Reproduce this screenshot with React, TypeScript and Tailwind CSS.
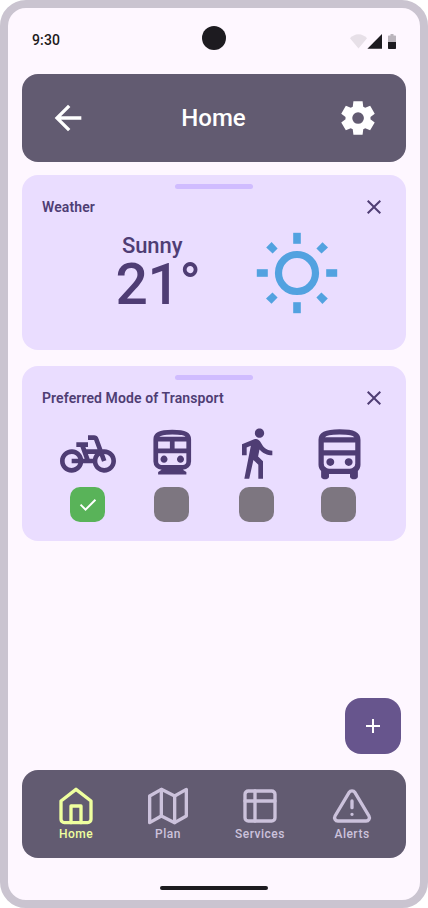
import type { ReactNode } from "react";

type IconProps = { className?: string };

/** Filled glyph drawn on the 960-unit Material grid. */
function Glyph({ d, className }: IconProps & { d: string }) {
  return (
    <svg viewBox="0 -960 960 960" fill="currentColor" className={className}>
      <path d={d} />
    </svg>
  );
}

/** Line icon drawn on a 24-unit grid. */
function LineIcon({ children }: { children: ReactNode }) {
  return (
    <svg
      viewBox="0 0 24 24"
      fill="none"
      stroke="currentColor"
      strokeWidth="2"
      strokeLinecap="round"
      strokeLinejoin="round"
      className="size-10"
    >
      {children}
    </svg>
  );
}

const ARROW_BACK =
  "m313-440 224 224-57 56-320-320 320-320 57 56-224 224h487v80H313Z";
const SETTINGS =
  "m370-80-16-128q-13-5-24.5-12T307-235l-119 50L78-375l103-78q-1-7-1-13.5v-27q0-6.5 1-13.5L78-585l110-190 119 50q11-8 23-15t24-12l16-128h220l16 128q13 5 24.5 12t22.5 15l119-50 110 190-103 78q1 7 1 13.5v27q0 6.5-2 13.5l103 78-110 190-118-50q-11 8-23 15t-24 12L590-80H370Zm112-260q58 0 99-41t41-99q0-58-41-99t-99-41q-59 0-99.5 41T342-480q0 58 40.5 99t99.5 41Z";
const CLOSE =
  "m256-200-56-56 224-224-224-224 56-56 224 224 224-224 56 56-224 224 224 224-56 56-224-224-224 224Z";
const CHECK = "M382-240 154-468l57-57 171 171 367-367 57 57-424 424Z";
const ADD = "M440-440H200v-80h240v-240h80v240h240v80H520v240h-80v-240Z";
const BUS =
  "M240-120q-17 0-28.5-11.5T200-160v-82q-18-20-29-44.5T160-340v-380q0-83 77-121.5T480-880q172 0 246 37t74 123v380q0 29-11 53.5T760-242v82q0 17-11.5 28.5T720-120h-40q-17 0-28.5-11.5T640-160v-40H320v40q0 17-11.5 28.5T280-120h-40Zm0-440h480v-120H240v120Zm142.5 222.5Q400-355 400-380t-17.5-42.5Q365-440 340-440t-42.5 17.5Q280-405 280-380t17.5 42.5Q315-320 340-320t42.5-17.5Zm280 0Q680-355 680-380t-17.5-42.5Q645-440 620-440t-42.5 17.5Q560-405 560-380t17.5 42.5Q595-320 620-320t42.5-17.5ZM258-760h448q-15-17-64.5-28.5T482-800q-107 0-156.5 12.5T258-760Zm62 480h320q33 0 56.5-23.5T720-360v-120H240v120q0 33 23.5 56.5T320-280Z";
const TRAIN =
  "M240-120v-40l60-40q-59 0-99.5-40.5T160-340v-380q0-83 77-121.5T480-880q172 0 246 37t74 123v380q0 59-40.5 99.5T660-200l60 40v40H240Zm0-440h200v-120H240v120Zm280 0h200v-120H520v120ZM382.5-337.5Q400-355 400-380t-17.5-42.5Q365-440 340-440t-42.5 17.5Q280-405 280-380t17.5 42.5Q315-320 340-320t42.5-17.5Zm280 0Q680-355 680-380t-17.5-42.5Q645-440 620-440t-42.5 17.5Q560-405 560-380t17.5 42.5Q595-320 620-320t42.5-17.5ZM300-280h360q26 0 43-17t17-43v-140H240v140q0 26 17 43t43 17ZM258-760h448q-15-17-64.5-28.5T482-800q-107 0-156.5 12.5T258-760Z";
const BIKE =
  "M18.18,10l-1.7-4.68C16.19,4.53,15.44,4,14.6,4H12v2h2.6l1.46,4h-4.81l-0.36-1H12V7H7v2h1.75l1.82,5H9.9c-0.44-2.23-2.31-3.88-4.65-3.99C2.45,9.87,0,12.2,0,15c0,2.8,2.2,5,5,5c2.46,0,4.45-1.69,4.9-4h4.2c0.44,2.23,2.31,3.88,4.65,3.99c2.8,0.13,5.25-2.19,5.25-5c0-2.8-2.2-5-5-5H18.18z M7.82,16c-0.4,1.17-1.49,2-2.82,2c-1.68,0-3-1.32-3-3s1.32-3,3-3c1.33,0,2.42,0.83,2.82,2H5v2H7.82z M14.1,14h-1.4l-0.73-2H15C14.56,12.58,14.24,13.25,14.1,14z M19,18c-1.68,0-3-1.32-3-3c0-0.93,0.41-1.73,1.05-2.28l0.96,2.64l1.88-0.68l-0.97-2.67c0.03,0,0.06-0.01,0.08-0.01c1.68,0,3,1.32,3,3S20.68,18,19,18z";
const WALK =
  "M13.5 5.5c1.1 0 2-.9 2-2s-.9-2-2-2-2 .9-2 2 .9 2 2 2zM9.8 8.9L7 23h2.1l1.8-8 2.1 2v6h2v-7.5l-2.1-2 .6-3C14.8 12 16.8 13 19 13v-2c-1.9 0-3.5-1-4.3-2.4l-1-1.6c-.4-.6-1-1-1.7-1-.3 0-.5.1-.8.1L6 8.3V13h2V9.6l1.8-.7";

function StatusBar() {
  return (
    <div className="grid h-[66px] grid-cols-3 px-6 pt-[18px]">
      <span className="pt-1 text-sm leading-5 font-medium tracking-[0.14px] text-[#1d1b20]">
        9:30
      </span>
      <span className="size-6 justify-self-center rounded-full bg-[#1d1b20]" />
      <svg viewBox="0 0 46 15" className="mt-2 h-[15px] w-[46px] justify-self-end text-[#1d1b20]">
        <path d="M8.5 14.6 0 4.2C2.2 2 5.2 .3 8.5 .3S14.8 2 17 4.2Z" fill="currentColor" opacity="0.1" />
        <path d="M17.4 14.7 32 0v14.7Z" fill="currentColor" />
        <path d="M38 8V2.2q0-.7.7-.7h1.8V0h3v1.5h1.8q.7 0 .7.7V8Z" fill="currentColor" opacity="0.3" />
        <path d="M38 8h8v6.3q0 .7-.7.7h-6.6q-.7 0-.7-.7Z" fill="currentColor" />
      </svg>
    </div>
  );
}

function Card({ title, children }: { title: string; children: ReactNode }) {
  return (
    <section className="flex h-[175px] flex-col rounded-2xl bg-[#eaddff] pt-[9px] text-[#4f3d74]">
      <div className="h-[5px] w-[78px] self-center rounded-full bg-[#d0bcff]" />
      <div className="mt-[6px] flex h-6 items-center justify-between px-5">
        <h2 className="text-sm leading-5 font-semibold tracking-[0.1px]">{title}</h2>
        <button aria-label="Close">
          <Glyph d={CLOSE} className="size-6" />
        </button>
      </div>
      {children}
    </section>
  );
}

function Sun() {
  return (
    <svg viewBox="-41 -41 82 82" className="size-[82px] text-[#52a2e0]" fill="currentColor">
      <circle r="18.5" fill="none" stroke="currentColor" strokeWidth="7.2" />
      {[0, 90, 180, 270].map((angle) => (
        <g key={angle} transform={`rotate(${angle})`}>
          <rect x="-3.8" y="-40.2" width="7.6" height="11" />
          <path d="M-25.4-31-19.4-24.5-24.4-19.4-30.8-25.5Z" />
        </g>
      ))}
    </svg>
  );
}

function Mode({ icon, checked = false }: { icon: ReactNode; checked?: boolean }) {
  return (
    <div className="flex flex-col items-center">
      <div className="flex h-[62px] items-start justify-center">{icon}</div>
      <span
        className={`flex size-[35px] items-center justify-center rounded-[10px] ${
          checked ? "bg-[#59b359]" : "bg-[#7d7680]"
        }`}
      >
        {checked && <Glyph d={CHECK} className="size-6 text-white" />}
      </span>
    </div>
  );
}

function NavItem({ label, active = false, children }: { label: string; active?: boolean; children: ReactNode }) {
  return (
    <a className={`flex flex-col items-center ${active ? "text-[#efff9f]" : "text-[#ccc2dc]"}`}>
      <LineIcon>{children}</LineIcon>
      <span className="text-xs leading-4 font-medium tracking-[0.5px]">{label}</span>
    </a>
  );
}

export default function App() {
  return (
    <div className="flex h-[908px] w-[428px] flex-col rounded-[26px] border-8 border-[#cac4d0] bg-[#fef7ff] font-['Roboto',sans-serif]">
      <StatusBar />
      <div className="flex flex-1 flex-col px-[14px]">
        <header className="flex h-[88px] items-center justify-between rounded-2xl bg-[#625b71] px-[26px] text-white">
          <button aria-label="Back">
            <Glyph d={ARROW_BACK} className="size-10" />
          </button>
          <h1 className="ml-px text-2xl font-medium">Home</h1>
          <button aria-label="Settings" className="mr-0.5">
            <Glyph d={SETTINGS} className="size-10" />
          </button>
        </header>

        <main className="flex flex-1 flex-col gap-4 pt-[13px]">
          <Card title="Weather">
            <div className="mt-[13px] flex pl-[93px]">
              <div className="flex w-[87px] flex-col">
                <span className="ml-[7px] text-[22px] leading-7 font-medium tracking-[-0.1px]">Sunny</span>
                <span className="ml-[0.5px] text-[57px] leading-[50px] font-medium tracking-[-0.5px]">21°</span>
              </div>
              <div className="ml-[54px]">
                <Sun />
              </div>
            </div>
          </Card>

          <Card title="Preferred Mode of Transport">
            <div className="mt-[15px] grid grid-cols-[84px_84px_84.8px_80.6px] pl-[23.8px]">
              <Mode
                checked
                icon={
                  <svg viewBox="0 0 24 24" fill="currentColor" className="mt-[0.5px] size-14">
                    <path d={BIKE} />
                  </svg>
                }
              />
              <Mode icon={<Glyph d={TRAIN} className="size-[56.5px]" />} />
              <Mode
                icon={
                  <svg viewBox="0 0 24 24" fill="currentColor" className="size-14">
                    <path d={WALK} />
                  </svg>
                }
              />
              <Mode icon={<Glyph d={BUS} className="-mt-[1.25px] ml-[1.2px] size-[63px]" />} />
            </div>
          </Card>

          <button
            aria-label="Add"
            className="mt-auto mr-[5px] mb-4 flex size-14 items-center justify-center self-end rounded-2xl bg-[#67558d] text-white"
          >
            <Glyph d={ADD} className="size-6" />
          </button>
        </main>

        <nav className="grid h-[88px] grid-cols-4 rounded-2xl bg-[#625b71] px-2 pt-4">
          <NavItem label="Home" active>
            <path d="M3 9l9-7 9 7v11a2 2 0 0 1-2 2H5a2 2 0 0 1-2-2z" />
            <path d="M9 22V12h6v10" />
          </NavItem>
          <NavItem label="Plan">
            <path d="M1 6v16l7-4 8 4 7-4V2l-7 4-8-4-7 4z" />
            <path d="M8 2v16M16 6v16" />
          </NavItem>
          <NavItem label="Services">
            <rect x="3" y="3" width="18" height="18" rx="2" />
            <path d="M3 9h18M9 3v18" />
          </NavItem>
          <NavItem label="Alerts">
            <path d="M10.29 3.86L1.82 18a2 2 0 0 0 1.71 3h16.94a2 2 0 0 0 1.71-3L13.71 3.86a2 2 0 0 0-3.42 0z" />
            <path d="M12 9v4M12 17h.01" />
          </NavItem>
        </nav>
      </div>
      <div className="flex h-[42px] items-end justify-center pb-[10px]">
        <div className="h-1 w-[108px] rounded-full bg-[#1d1b20]" />
      </div>
    </div>
  );
}
